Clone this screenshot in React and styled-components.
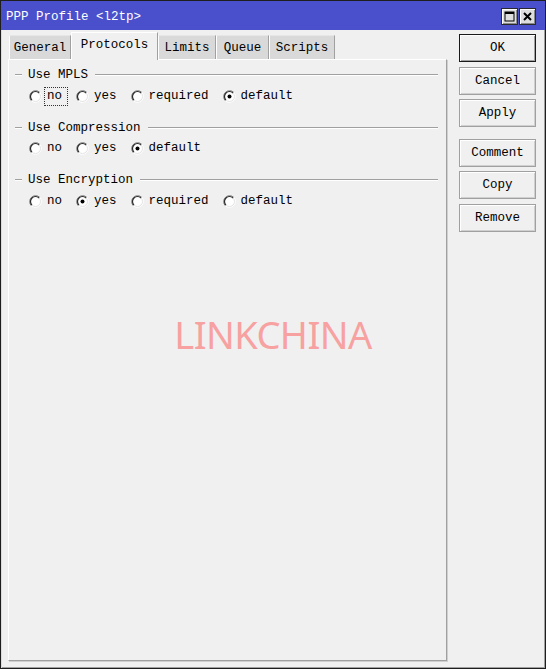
import React from "react";
import styled, { createGlobalStyle } from "styled-components";

const GlobalStyle = createGlobalStyle`
  html, body {
    margin: 0;
    padding: 0;
    background: #f0f0f0;
  }
  body {
    font-family: "Liberation Mono", "DejaVu Sans Mono", monospace;
    font-size: 12.5px;
    color: #000;
  }
`;

const Window = styled.div`
  position: relative;
  width: 546px;
  height: 669px;
  box-sizing: border-box;
  border: 1px solid #1e1e1e;
  box-shadow: inset 1px 1px 0 #dcdcdc, inset -1px -1px 0 #a0a0a0;
  background: #f0f0f0;
  display: flex;
  flex-direction: column;
  overflow: hidden;
`;

const TitleBar = styled.div`
  height: 28px;
  background: #4a50cc;
  color: #fff;
  display: flex;
  align-items: center;
  padding: 1px 9px 0 5px;
`;

const Title = styled.div`
  flex: 1;
  white-space: pre;
  padding-top: 2px;
`;

const TitleButton = styled.div`
  box-sizing: border-box;
  width: 17px;
  height: 17px;
  margin-left: 1px;
  background: #dedede;
  border: 1px solid #2a2a2a;
  box-shadow: inset 1px 1px 0 #fff, inset -1px -1px 0 #8a8a8a;
  display: flex;
  align-items: center;
  justify-content: center;
`;

const Body = styled.div`
  flex: 1;
  display: flex;
  padding: 1px 9px 7px 7px;
  min-height: 0;
`;

const Main = styled.div`
  width: 439px;
  display: flex;
  flex-direction: column;
`;

const TabStrip = styled.div`
  display: flex;
  align-items: flex-end;
  height: 28px;
  padding-left: 1px;
`;

const Tab = styled.div`
  box-sizing: border-box;
  width: ${(p) => p.$w}px;
  height: ${(p) => (p.$active ? 28 : 24)}px;
  display: flex;
  align-items: center;
  justify-content: center;
  background: ${(p) => (p.$active ? "#f0f0f0" : "#d9d9d9")};
  border-left: 1px solid #fff;
  border-top: 1px solid ${(p) => (p.$active ? "#fff" : "#e6e6e6")};
  border-right: 1px solid #a0a0a0;
  margin-bottom: ${(p) => (p.$active ? -1 : 0)}px;
  position: relative;
  padding-bottom: ${(p) => (p.$active ? 3 : 0)}px;
`;

const Panel = styled.div`
  flex: 1;
  box-sizing: border-box;
  border: 1px solid;
  border-color: #fff #a0a0a0 #a0a0a0 #fff;
  box-shadow: 1px 1px 0 #cfcfcf;
  padding: 7px 8px 0 6px;
`;

const Group = styled.div`
  margin-bottom: 13.5px;
`;

const Legend = styled.div`
  display: flex;
  align-items: center;
  height: 16px;
`;

const EtchLine = styled.div`
  flex: ${(p) => (p.$grow ? 1 : "none")};
  width: ${(p) => (p.$grow ? "auto" : "7px")};
  height: 1px;
  background: #a0a0a0;
  border-bottom: 1px solid #fff;
`;

const LegendText = styled.span`
  margin: 0 7px 0 6px;
  white-space: pre;
`;

const Options = styled.div`
  display: flex;
  align-items: center;
  height: 20px;
  margin-top: 3px;
  padding-left: 14px;
`;

const Option = styled.label`
  display: flex;
  align-items: center;
  margin-right: 8px;
`;

const OptionText = styled.span`
  margin-left: 2px;
  padding: 1px 5px 1px 2px;
  border: 1px dotted ${(p) => (p.$focus ? "#333" : "transparent")};
  line-height: 15px;
`;

const Side = styled.div`
  margin-left: 12px;
  padding-top: 3px;
  display: flex;
  flex-direction: column;
  gap: 4.5px;
`;

const Button = styled.div`
  box-sizing: border-box;
  width: 77px;
  height: 28px;
  display: flex;
  align-items: center;
  justify-content: center;
  background: #f0f0f0;
  border: 1px solid ${(p) => (p.$default ? "#1a1a1a" : "#a0a0a0")};
  box-shadow: ${(p) =>
    p.$default
      ? "inset 1px 1px 0 #fff, inset -1px -1px 0 #a0a0a0"
      : "inset 1px 1px 0 #fff, inset -1px -1px 0 #d0d0d0"};
  margin-top: ${(p) => (p.$spaced ? 7 : 0)}px;
`;

const Watermark = styled.div`
  position: absolute;
  left: 50%;
  top: 50%;
  transform: translate(-50%, -50%);
  margin-top: -1px;
  font-family: "Noto Sans", "Open Sans", sans-serif;
  font-size: 38px;
  letter-spacing: -0.6px;
  color: #f7a1a1;
  pointer-events: none;
  white-space: nowrap;
`;

const Radio = ({ checked }) => (
  <svg width="13" height="13" viewBox="0 0 13 13">
    <circle cx="6.5" cy="6.5" r="5.5" fill="#fff" />
    <path d="M2.26 10.74 A6 6 0 0 1 10.74 2.26" stroke="#808080" strokeWidth="1" fill="none" />
    <path d="M10.74 2.26 A6 6 0 0 1 2.26 10.74" stroke="#fff" strokeWidth="1" fill="none" />
    <path d="M2.96 10.04 A5 5 0 0 1 10.04 2.96" stroke="#2a2a2a" strokeWidth="1.2" fill="none" />
    <path d="M10.04 2.96 A5 5 0 0 1 2.96 10.04" stroke="#e3e3e3" strokeWidth="1" fill="none" />
    {checked && <circle cx="6.5" cy="6.5" r="2" fill="#000" />}
  </svg>
);

const groups = [
  { title: "Use MPLS", options: ["no", "yes", "required", "default"], value: "default", focus: "no" },
  { title: "Use Compression", options: ["no", "yes", "default"], value: "default" },
  { title: "Use Encryption", options: ["no", "yes", "required", "default"], value: "yes" },
];

const tabs = [
  { name: "General", w: 62 },
  { name: "Protocols", w: 87, active: true },
  { name: "Limits", w: 58 },
  { name: "Queue", w: 53 },
  { name: "Scripts", w: 66 },
];

const App = () => {
  return (
    <>
      <GlobalStyle />
      <Window>
        <TitleBar>
          <Title>PPP Profile &lt;l2tp&gt;</Title>
          <TitleButton>
            <svg width="11" height="11" viewBox="0 0 11 11">
              <rect x="1" y="1" width="9" height="9" fill="none" stroke="#000" strokeWidth="1" />
              <rect x="1" y="1" width="9" height="2" fill="#000" />
            </svg>
          </TitleButton>
          <TitleButton>
            <svg width="11" height="11" viewBox="0 0 11 11">
              <path d="M2 2 L9 9 M9 2 L2 9" stroke="#000" strokeWidth="2" />
            </svg>
          </TitleButton>
        </TitleBar>
        <Body>
          <Main>
            <TabStrip>
              {tabs.map((t) => (
                <Tab key={t.name} $w={t.w} $active={t.active}>
                  {t.name}
                </Tab>
              ))}
            </TabStrip>
            <Panel>
              {groups.map((g) => (
                <Group key={g.title}>
                  <Legend>
                    <EtchLine />
                    <LegendText>{g.title}</LegendText>
                    <EtchLine $grow />
                  </Legend>
                  <Options>
                    {g.options.map((o) => (
                      <Option key={o}>
                        <Radio checked={o === g.value} />
                        <OptionText $focus={o === g.focus}>{o}</OptionText>
                      </Option>
                    ))}
                  </Options>
                </Group>
              ))}
            </Panel>
          </Main>
          <Side>
            <Button $default>OK</Button>
            <Button>Cancel</Button>
            <Button>Apply</Button>
            <Button $spaced>Comment</Button>
            <Button>Copy</Button>
            <Button>Remove</Button>
          </Side>
        </Body>
        <Watermark>LINKCHINA</Watermark>
      </Window>
    </>
  );
};

export default App;
